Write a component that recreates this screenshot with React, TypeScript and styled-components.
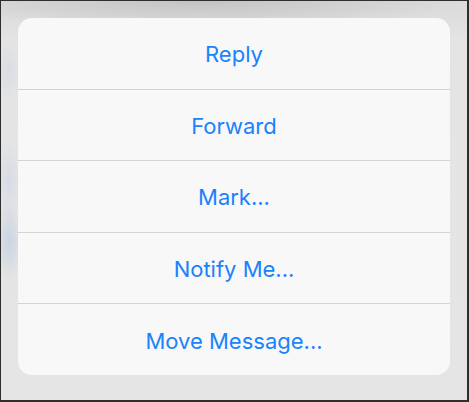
import React from 'react';
import styled, { createGlobalStyle } from 'styled-components';

const GlobalStyle = createGlobalStyle`
  html, body {
    margin: 0;
    padding: 0;
    width: 469px;
    height: 402px;
    overflow: hidden;
  }
  body {
    font-family: Inter, "Liberation Sans", sans-serif;
  }
`;

const Frame = styled.div`
  box-sizing: border-box;
  width: 469px;
  height: 402px;
  border-style: solid;
  border-color: #2e2e2e;
  border-width: 1px 2px 2px 1px;
  padding: 17px 17px 25px 17px;
  background:
    radial-gradient(ellipse 14px 40px at 8px 240px, rgba(190, 205, 225, 0.7), transparent),
    radial-gradient(ellipse 14px 40px at 8px 180px, rgba(200, 212, 228, 0.5), transparent),
    radial-gradient(ellipse 14px 30px at 8px 70px, rgba(205, 215, 230, 0.5), transparent),
    radial-gradient(ellipse 260px 30px at 200px 0px, rgba(190, 190, 190, 0.8), transparent),
    linear-gradient(180deg, #dadada 0%, #e4e4e4 10%, #e5e5e5 100%);
`;

const Sheet = styled.div`
  width: 432px;
  height: 357px;
  background: #f8f8f8;
  border-radius: 14px;
  display: flex;
  flex-direction: column;
  overflow: hidden;
`;

const Action = styled.button<{ $last?: boolean }>`
  flex: 1;
  border: none;
  border-bottom: ${(p) => (p.$last ? 'none' : '1px solid #d3d3d5')};
  background: transparent;
  color: #1a82fb;
  font-family: Inter, "Liberation Sans", sans-serif;
  font-size: 22px;
  padding: 2px 0 0;
  cursor: pointer;
`;

const items = ['Reply', 'Forward', 'Mark...', 'Notify Me...', 'Move Message...'];

export default function App() {
  return (
    <>
      <GlobalStyle />
      <Frame>
        <Sheet>
          {items.map((label, i) => (
            <Action key={label} $last={i === items.length - 1}>
              {label}
            </Action>
          ))}
        </Sheet>
      </Frame>
    </>
  );
}
